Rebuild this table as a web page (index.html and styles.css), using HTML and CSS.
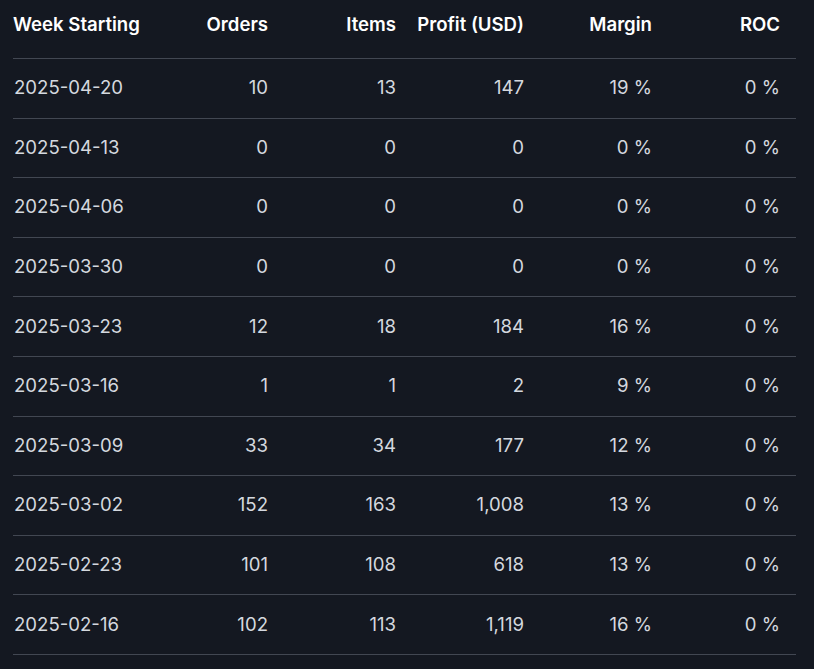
FILE: index.html
```html
<!DOCTYPE html>
<html>
<head>
<meta charset="utf-8">
<link rel="stylesheet" href="styles.css">
</head>
<body>
<table class="report">
  <thead>
    <tr>
      <th class="col-week">Week Starting</th>
      <th>Orders</th>
      <th>Items</th>
      <th>Profit (USD)</th>
      <th>Margin</th>
      <th>ROC</th>
    </tr>
  </thead>
  <tbody>
    <tr><td class="col-week">2025-04-20</td><td>10</td><td>13</td><td>147</td><td>19 %</td><td>0 %</td></tr>
    <tr><td class="col-week">2025-04-13</td><td>0</td><td>0</td><td>0</td><td>0 %</td><td>0 %</td></tr>
    <tr><td class="col-week">2025-04-06</td><td>0</td><td>0</td><td>0</td><td>0 %</td><td>0 %</td></tr>
    <tr><td class="col-week">2025-03-30</td><td>0</td><td>0</td><td>0</td><td>0 %</td><td>0 %</td></tr>
    <tr><td class="col-week">2025-03-23</td><td>12</td><td>18</td><td>184</td><td>16 %</td><td>0 %</td></tr>
    <tr><td class="col-week">2025-03-16</td><td>1</td><td>1</td><td>2</td><td>9 %</td><td>0 %</td></tr>
    <tr><td class="col-week">2025-03-09</td><td>33</td><td>34</td><td>177</td><td>12 %</td><td>0 %</td></tr>
    <tr><td class="col-week">2025-03-02</td><td>152</td><td>163</td><td>1,008</td><td>13 %</td><td>0 %</td></tr>
    <tr><td class="col-week">2025-02-23</td><td>101</td><td>108</td><td>618</td><td>13 %</td><td>0 %</td></tr>
    <tr><td class="col-week">2025-02-16</td><td>102</td><td>113</td><td>1,119</td><td>16 %</td><td>0 %</td></tr>
  </tbody>
</table>
</body>
</html>
```
FILE: styles.css
```css
html, body {
  margin: 0;
  padding: 0;
  background: #141821;
}
body {
  padding: 0 18px 0 13px;
  font-family: Inter, "Noto Sans", sans-serif;
}
.report {
  width: 783px;
  border-collapse: collapse;
  table-layout: fixed;
}
.report th,
.report td {
  box-sizing: border-box;
  text-align: right;
  padding: 0 16px 0 0;
  width: 128px;
  font-size: 18.6px;
}
.report th {
  color: #ffffff;
  font-weight: 600;
  line-height: 28px;
  padding-top: 10px;
  padding-bottom: 20px;
  border-bottom: 1px solid #424752;
}
.report td {
  color: #d4d8df;
  font-weight: 400;
  height: 59.6px;
  line-height: 28px;
  padding-bottom: 2px;
  border-bottom: 1px solid #424752;
}
.report .col-week {
  width: 143px;
  text-align: left;
  padding-left: 1px;
}
.report th.col-week {
  padding-left: 0;
}
```
